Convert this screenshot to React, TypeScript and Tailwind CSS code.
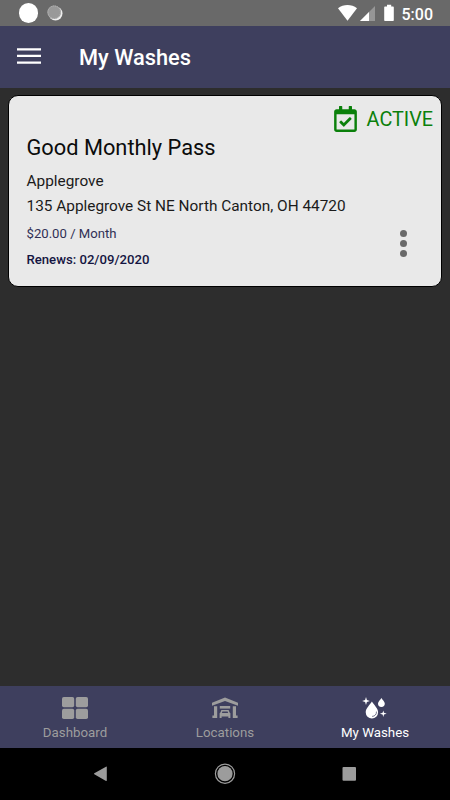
import React from 'react';
import { FaRegCalendarCheck } from 'react-icons/fa';

const StatusBar: React.FC = () => (
  <div className="h-[26px] shrink-0 bg-[#696969] flex items-center justify-between pl-[18.5px] pr-[17px]">
    <div className="flex items-center gap-[8.5px]">
      <div className="w-[19.5px] h-[19.5px] rounded-full bg-white" />
      <svg className="w-4 h-4" viewBox="0 0 16 16">
        <circle cx="8.5" cy="8.5" r="7" fill="#eeeeee" />
        <circle cx="7.2" cy="7.2" r="6.8" fill="#999999" />
        <circle cx="7.2" cy="7.2" r="6.3" fill="none" stroke="#bdbdbd" strokeWidth="1" strokeDasharray="1 1" />
      </svg>
    </div>
    <div className="flex items-center">
      <svg className="w-[56px] h-[18px] mr-[8px]" viewBox="0 0 56 18" fill="#ffffff">
        <path d="M0 4.2C5.5 0 13.5 0 19 4.2L9.5 16.8z" />
        <path d="M37 2v15H22z" fill="#969696" />
        <path d="M31 8v9h-9z" />
        <path d="M49 .8h4.2v1.6h1.6c.6 0 1 .4 1 1v12.6c0 .6-.4 1-1 1h-7.6c-.6 0-1-.4-1-1V3.4c0-.6.4-1 1-1H49z" />
      </svg>
      <span className="mt-[3px] text-[16px] leading-6 font-medium text-white">5:00</span>
    </div>
  </div>
);

const LocationsIcon: React.FC = () => (
  <svg className="w-[26px] h-[22px]" viewBox="0 0 26 22" fill="currentColor">
    <path d="M13 .5 0 5.7V8.8L13 4l13 4.8V5.7z" />
    <path d="M2 9.3h3.2V21H.4v-2.4H2zM24 9.3h-3.2V21h4.8v-2.4H24z" />
    <path d="M7.8 9h10.4v2.6H7.8z" />
    <path fillRule="evenodd" d="M9.4 13h7.2l1 2.4.8.8V21h-2v-1.4H9.6V21h-2v-4.8l.8-.8zM10.4 14.4l-.5 1.5h6.2l-.5-1.5z" />
  </svg>
);

const WashesIcon: React.FC = () => (
  <svg className="w-[26px] h-[22px]" viewBox="0 0 26 22" fill="currentColor">
    <path d="M9.9 4.6c2 3.4 6.2 6.8 6.2 10.7a6.2 6.2 0 0 1-12.4 0c0-3.9 4.2-7.3 6.2-10.7z" />
    <path d="M14.5 15c.1 2.4-1.6 4.3-4 4.4" fill="none" stroke="#3e3f5e" strokeWidth=".7" strokeLinecap="round" />
    <path d="M19.4 1c1.1 2 3.4 3.6 3.4 5.6a3.4 3.4 0 0 1-6.8 0c0-2 2.3-3.6 3.4-5.6z" />
    <path d="m4 0 .9 3 3 1-3 1L4 8l-.9-3-3-1 3-1z" />
    <path d="m21.3 13.4.7 2.4 2.7.9-2.7.9-.7 2.5-.7-2.5-2.7-.9 2.7-.9z" />
  </svg>
);

const DashboardIcon: React.FC = () => (
  <svg className="w-[26px] h-[22px]" viewBox="0 0 26 22" fill="currentColor">
    <rect width="12.2" height="10.2" rx="1.8" />
    <rect x="13.8" width="12.2" height="10.2" rx="1.8" />
    <rect y="11.8" width="12.2" height="10.2" rx="1.8" />
    <rect x="13.8" y="11.8" width="12.2" height="10.2" rx="1.8" />
  </svg>
);

const tabs = [
  { label: 'Dashboard', icon: <DashboardIcon />, active: false },
  { label: 'Locations', icon: <LocationsIcon />, active: false },
  { label: 'My Washes', icon: <WashesIcon />, active: true },
];

const App: React.FC = () => {
  return (
    <div className="w-[450px] h-[800px] flex flex-col overflow-hidden bg-[#2d2d2d] font-['Roboto',sans-serif] whitespace-nowrap">
      <StatusBar />

      <header className="h-[62px] shrink-0 bg-[#3e3f5e] flex items-center pl-[17px]">
        <svg className="w-6 h-4 -mt-[3px]" viewBox="0 0 24 16" fill="#ffffff">
          <path d="M0 .2h24v2.3H0zM0 6.8h24v2.3H0zM0 13.4h24v2.3H0z" />
        </svg>
        <h1 className="ml-[38px] mt-[3px] text-[21.8px] font-medium text-white">My Washes</h1>
      </header>

      <main className="flex-1 px-2 pt-[7px]">
        <section className="h-[191.5px] rounded-[10px] border border-black bg-[#e9e9e9] pl-[17.5px] pr-2 flex flex-col">
          <div className="flex justify-end items-center gap-[9.5px] h-[28px] mt-[10px] text-[#0b800b]">
            <FaRegCalendarCheck className="w-[23px] h-[26px] -mt-[3px]" />
            <span className="text-[19.8px] leading-7">ACTIVE</span>
          </div>
          <h2 className="text-[21.8px] leading-7 text-[#0c0c0c]">Good Monthly Pass</h2>
          <div className="flex justify-between">
            <div>
              <p className="mt-[9px] text-[15.38px] leading-5 text-[#1b1b1b]">Applegrove</p>
              <p className="mt-[5px] text-[15.38px] leading-5 text-[#1b1b1b]">135 Applegrove St NE North Canton, OH 44720</p>
              <p className="mt-[8px] text-[13.15px] leading-5 text-[#303055]">$20.00 / Month</p>
              <p className="mt-[6px] text-[13.15px] leading-5 font-medium text-[#151542]">Renews: 02/09/2020</p>
            </div>
            <div className="flex flex-col gap-[3px] mt-[68px] mr-[26px]">
              <div className="w-[7px] h-[7px] rounded-full bg-[#696969]" />
              <div className="w-[7px] h-[7px] rounded-full bg-[#696969]" />
              <div className="w-[7px] h-[7px] rounded-full bg-[#696969]" />
            </div>
          </div>
        </section>
      </main>

      <nav className="h-[62px] shrink-0 bg-[#3e3f5e] grid grid-cols-3">
        {tabs.map(({ label, icon, active }) => (
          <div key={label} className={`flex flex-col items-center pt-[11px] ${active ? 'text-white' : 'text-[#9d9d9d]'}`}>
            {icon}
            <span className="mt-[5px] text-[13.3px] leading-[18px]">{label}</span>
          </div>
        ))}
      </nav>

      <div className="h-[52px] shrink-0 bg-black text-[#9c9c9c]">
        <svg className="w-full h-full" viewBox="0 0 450 52" fill="currentColor">
          <path d="M94.3 25.3 106 18.7c.4-.2.8 0 .8.4v13.4c0 .4-.4.6-.8.4l-11.7-6.6c-.4-.2-.4-.8 0-1z" />
          <circle cx="225" cy="25.7" r="9.6" fill="none" stroke="currentColor" strokeWidth="1.2" />
          <circle cx="225" cy="25.7" r="7.6" />
          <rect x="342.5" y="19" width="13.5" height="13.8" rx="1" />
        </svg>
      </div>
    </div>
  );
};

export default App;
